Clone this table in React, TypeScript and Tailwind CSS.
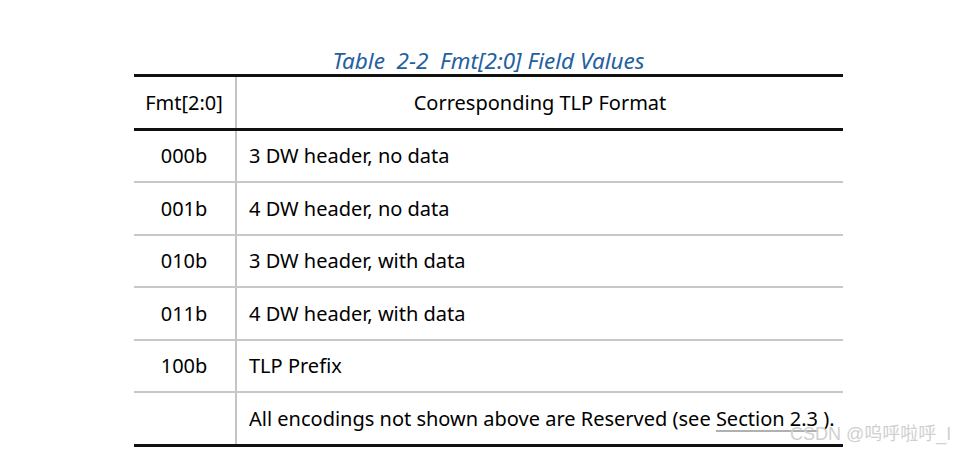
import React from "react";

const rows: [string, React.ReactNode, string][] = [
  ["000b", "3 DW header, no data", "h-[52px]"],
  ["001b", "4 DW header, no data", "h-[53px]"],
  ["010b", "3 DW header, with data", "h-[52px]"],
  ["011b", "4 DW header, with data", "h-[53px]"],
  ["100b", "TLP Prefix", "h-[52px]"],
];

export default function App() {
  const font = { fontFamily: '"Noto Sans", "Open Sans", sans-serif' };
  return (
    <div className="relative w-[956px] h-[451px] bg-white overflow-hidden" style={font}>
      <div className="h-[74px] pl-[134px] flex items-end">
        <div className="w-[709px] text-center italic text-[22.5px] leading-[26px] text-[#23609f]">
          Table&nbsp; 2-2&nbsp; Fmt[2:0] Field Values
        </div>
      </div>
      <div className="ml-[134px] w-[709px] border-t-[3px] border-b-[3px] border-[#111] text-[20px] text-black">
        <div className="flex h-[54px] border-b-[3px] border-[#111]">
          <div className="w-[103px] border-r-2 border-[#c4c4c4] flex items-center justify-center pr-[1px]">Fmt[2:0]</div>
          <div className="flex-1 flex items-center justify-center">Corresponding TLP Format</div>
        </div>
        {rows.map(([a, b, h]) => (
          <div key={a} className={`flex ${h} border-b-2 border-[#c8c8c8]`}>
            <div className="w-[103px] border-r-2 border-[#c4c4c4] flex items-center justify-center pr-[1px]">{a}</div>
            <div className="flex-1 flex items-center pl-[12px]">{b}</div>
          </div>
        ))}
        <div className="flex h-[51px]">
          <div className="w-[103px] border-r-2 border-[#c4c4c4]"></div>
          <div className="flex-1 flex items-center pl-[12px]">
            <span>
              All encodings not shown above are Reserved (see{" "}
              <span className="underline decoration-[#b0b0b0] decoration-2 underline-offset-[4px]">Section 2.3</span>
              {" "}).
            </span>
          </div>
        </div>
      </div>
      <div
        className="absolute left-[790px] top-[421px] text-[18px] text-[#d0d0d0] whitespace-nowrap"
        style={{ fontFamily: '"Liberation Sans", "Noto Sans CJK SC", sans-serif' }}
      >
        CSDN @呜呼啦呼_I
      </div>
    </div>
  );
}
